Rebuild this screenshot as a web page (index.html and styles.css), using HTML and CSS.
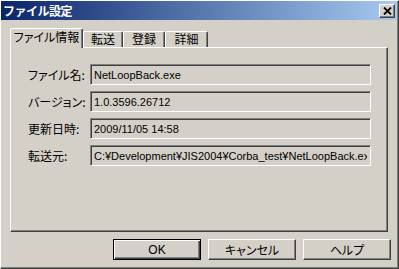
FILE: index.html
```html
<!DOCTYPE html>
<html lang="ja">
<head>
    <meta charset="UTF-8">
    <title>ファイル設定</title>
    <link rel="stylesheet" href="styles.css">
</head>
<body>

<div class="window">
    <!-- Caption bar -->
    <div class="titlebar">
        <span class="title">ファイル設定</span>
        <button class="close" title="閉じる">
            <svg width="9" height="8" viewBox="0 0 9 8">
                <path d="M1 0.5 L8 7.5 M8 0.5 L1 7.5" stroke="#000" stroke-width="1.8" fill="none"/>
            </svg>
        </button>
    </div>

    <div class="content">
        <!-- Tabs -->
        <div class="tabs">
            <div class="tab active">ファイル情報</div>
            <div class="tab t1">転送</div>
            <div class="tab t2">登録</div>
            <div class="tab t3">詳細</div>
        </div>

        <!-- Tab page -->
        <div class="panel">
            <div class="row">
                <label>ファイル名:</label>
                <input type="text" class="field" value="NetLoopBack.exe" readonly>
            </div>
            <div class="row">
                <label>バージョン:</label>
                <input type="text" class="field" value="1.0.3596.26712" readonly>
            </div>
            <div class="row">
                <label>更新日時:</label>
                <input type="text" class="field" value="2009/11/05 14:58" readonly>
            </div>
            <div class="row">
                <label>転送元:</label>
                <input type="text" class="field" value="C:¥Development¥JIS2004¥Corba_test¥NetLoopBack.exe" readonly>
            </div>
        </div>

        <!-- Dialog buttons -->
        <div class="buttons">
            <button class="btn default">OK</button>
            <button class="btn">キャンセル</button>
            <button class="btn">ヘルプ</button>
        </div>
    </div>
</div>

</body>
</html>
```

FILE: styles.css
```css
/* Page */
body {
    margin: 0;
    padding: 0;
    background: #d4d0c8;
    font-family: "Liberation Sans", "Noto Sans CJK JP", sans-serif;
    font-size: 12px;
    color: #000;
}

/* Dialog frame */
.window {
    width: 399px;
    height: 269px;
    box-sizing: border-box;
    background: #d4d0c8;
    border-top: 1px solid #fff;
    border-left: 1px solid #fff;
    border-right: 1px solid #404040;
    border-bottom: 1px solid #404040;
    box-shadow: inset -1px -1px #808080;
    display: flex;
    flex-direction: column;
}

/* Caption bar */
.titlebar {
    height: 19px;
    margin-right: 1px;
    background: linear-gradient(to right, #0a246a, #a6caf0);
    display: flex;
    align-items: flex-start;
    justify-content: space-between;
}

.title {
    color: #fff;
    font-family: "Noto Sans CJK JP", sans-serif;
    font-weight: bold;
    font-size: 12px;
    line-height: 19px;
    padding-left: 2px;
    letter-spacing: -0.5px;
}

.close {
    width: 16px;
    height: 14px;
    margin: 3px 2px 0 0;
    padding: 0;
    background: #d4d0c8;
    border-top: 1px solid #fff;
    border-left: 1px solid #fff;
    border-right: 1px solid #404040;
    border-bottom: 1px solid #404040;
    box-shadow: inset -1px -1px #808080;
    display: flex;
    align-items: center;
    justify-content: center;
}

.content {
    padding: 8px 0 0 9px;
}

/* Tabs */
.tabs {
    display: flex;
    align-items: flex-end;
    height: 19px;
    font-family: "Noto Sans CJK JP", sans-serif;
}

.tab {
    height: 16px;
    box-sizing: border-box;
    border-top: 1px solid #fff;
    border-left: 1px solid #fff;
    border-right: 1px solid #404040;
    box-shadow: inset -1px 0 #808080;
    border-radius: 2px 2px 0 0;
    text-align: center;
    line-height: 14px;
    font-size: 12px;
    font-feature-settings: "palt";
}

.tab.t1 { width: 40px; }
.tab.t2 { width: 42px; }
.tab.t3 { width: 43px; }

.tab.active {
    position: relative;
    z-index: 1;
    width: 73px;
    height: 20px;
    margin-bottom: -1px;
    background: #d4d0c8;
    line-height: 16px;
}

/* Tab page */
.panel {
    width: 378px;
    height: 185px;
    box-sizing: border-box;
    border-top: 1px solid #fff;
    border-left: 1px solid #fff;
    border-right: 1px solid #404040;
    border-bottom: 1px solid #404040;
    box-shadow: inset -1px -1px #808080;
    padding: 16px 0 0 17px;
    display: flex;
    flex-direction: column;
    gap: 6px;
}

.row {
    display: flex;
    align-items: center;
}

.row label {
    width: 62px;
    font-family: "Noto Sans CJK JP", sans-serif;
    font-feature-settings: "palt";
    font-size: 12px;
}

.field {
    width: 281px;
    height: 21px;
    box-sizing: border-box;
    margin: 0;
    padding: 0 3px;
    background: #d4d0c8;
    border-top: 1px solid #808080;
    border-left: 1px solid #808080;
    border-right: 1px solid #fff;
    border-bottom: 1px solid #fff;
    box-shadow: inset 1px 1px #404040;
    font-family: "Liberation Sans", "Noto Sans CJK JP", sans-serif;
    font-size: 11px;
    color: #000;
    outline: none;
}

/* Buttons */
.buttons {
    display: flex;
    gap: 7px;
    margin: 7px 0 0 103px;
}

.btn {
    width: 88px;
    height: 21px;
    box-sizing: border-box;
    padding: 0;
    background: #d4d0c8;
    border-top: 1px solid #fff;
    border-left: 1px solid #fff;
    border-right: 1px solid #404040;
    border-bottom: 1px solid #404040;
    box-shadow: inset -1px -1px #808080;
    font-family: "Liberation Sans", "Noto Sans CJK JP", sans-serif;
    font-feature-settings: "palt";
    font-size: 12px;
    color: #000;
}

.btn.default {
    border: 1px solid #000;
    box-shadow: inset 1px 1px #fff, inset -1px -1px #404040, inset -2px -2px #808080;
}
```
